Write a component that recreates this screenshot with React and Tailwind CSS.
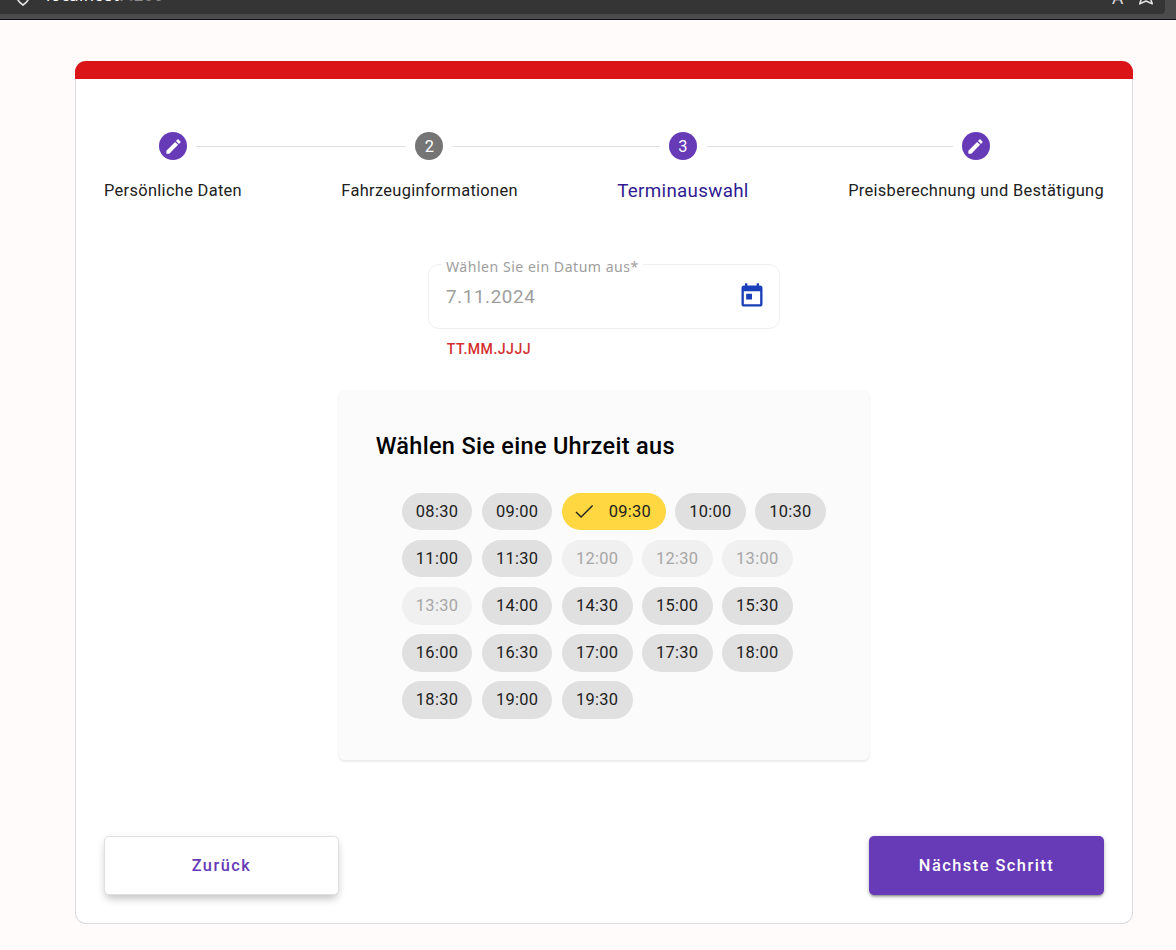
import React from "react";

const slots = [
  "08:30", "09:00", "09:30", "10:00", "10:30", "11:00", "11:30", "12:00", "12:30", "13:00",
  "13:30", "14:00", "14:30", "15:00", "15:30", "16:00", "16:30", "17:00", "17:30", "18:00",
  "18:30", "19:00", "19:30",
];
const disabledSlots = ["12:00", "12:30", "13:00", "13:30"];
const selectedSlot = "09:30";

function Pencil() {
  return (
    <svg viewBox="0 0 24 24" className="size-[19px] fill-white">
      <path d="M3 17.25V21h3.75L17.81 9.94l-3.75-3.75L3 17.25zM20.71 7.04c.39-.39.39-1.02 0-1.41l-2.34-2.34c-.39-.39-1.02-.39-1.41 0l-1.83 1.83 3.75 3.75 1.83-1.83z" />
    </svg>
  );
}

function StepIcon({ children, muted }) {
  return (
    <div
      className={`flex size-[28.2px] shrink-0 items-center justify-center rounded-full text-[16.4px] leading-none text-white ${
        muted ? "bg-[#757575]" : "bg-[#673ab7]"
      }`}
    >
      {children}
    </div>
  );
}

function BrowserBar() {
  return (
    <div className="h-5 overflow-hidden border-b border-[#160f1a] bg-[#4b4b4b] pr-[11px]">
      <div className="flex h-[14px] items-end justify-between overflow-hidden rounded-br-[4px] bg-[#353535] pl-[15px] pr-[11px]">
        <div className="flex h-[14px] items-start">
          <svg viewBox="0 0 16 20" className="-mt-[14px] h-5 w-4 fill-none stroke-[#e6e6e6] stroke-[1.6]">
            <path d="M8 1.5 14 4v7c0 3.5-2.5 5.5-6 8-3.5-2.5-6-4.5-6-8V4z" />
          </svg>
          <span className="-mt-[15px] ml-[15px] font-['Noto_Sans'] text-[16.5px] leading-5 tracking-[0.4px] text-white">
            localhost<span className="text-[#8c8c8c]">:4200</span>
          </span>
        </div>
        <div className="flex h-[14px] items-start gap-[15px]">
          <span className="-mt-[14px] font-['Noto_Sans'] text-[17px] leading-6 text-[#e0e0e0]">A</span>
          <svg viewBox="0 0 16 16" className="-mt-[11px] size-4 fill-none stroke-[#e0e0e0] stroke-[1.6]">
            <path strokeLinejoin="round" d="M8 1.2 10 6l5 .4-2.4 3.3 1.6 5.1L8 12 1.8 14.8l1.6-5.1L1 6.4 6 6z" />
          </svg>
        </div>
      </div>
    </div>
  );
}

function Stepper() {
  return (
    <div className="px-7">
      <div className="flex items-center pl-[55px]">
        <StepIcon><Pencil /></StepIcon>
        <div className="ml-[9px] mr-[9px] h-px w-[210px] bg-[#e0e0e0]" />
        <StepIcon muted><span className="pt-[2px]">2</span></StepIcon>
        <div className="ml-[9.5px] mr-[9px] h-px w-[207px] bg-[#e0e0e0]" />
        <StepIcon><span className="pt-[2px]">3</span></StepIcon>
        <div className="ml-[9.5px] mr-[9px] h-px w-[246px] bg-[#e0e0e0]" />
        <StepIcon><Pencil /></StepIcon>
      </div>
      <div className="mt-[18.8px] flex h-6 items-center justify-between text-[16.43px] tracking-[0.31px] text-[#212121]">
        <span>Persönliche Daten</span>
        <span>Fahrzeuginformationen</span>
        <span className="text-[18.8px] tracking-[0.31px] text-[#311b92]">Terminauswahl</span>
        <span>Preisberechnung und Bestätigung</span>
      </div>
    </div>
  );
}

function DateField() {
  return (
    <div className="mx-auto mt-[61px] w-[352px]">
      <div className="relative flex h-[65px] items-center justify-between rounded-[11px] border border-[#f0f0f0] pl-[17px] pr-[13px]">
        <span className="absolute -top-[9px] left-[13px] bg-white px-1 font-['Noto_Sans'] text-[14.1px] leading-[22px] tracking-[0.5px] whitespace-nowrap text-[#9e9e9e]">
          Wählen Sie ein Datum aus*
        </span>
        <span className="pt-px text-[18.8px] tracking-[0.62px] text-[#9e9e9e]">7.11.2024</span>
        <svg viewBox="0 0 24 24" className="mb-[1px] size-7 fill-[#1a3fb8]">
          <path d="M19 3h-1V1h-2v2H8V1H6v2H5c-1.11 0-1.99.9-1.99 2L3 19c0 1.1.89 2 2 2h14c1.1 0 2-.9 2-2V5c0-1.1-.9-2-2-2zm0 16H5V8h14v11zM7 10h5v5H7z" />
        </svg>
      </div>
      <p className="mt-[9px] pl-[18.8px] text-[14.1px] leading-[22px] font-medium tracking-[0.47px] text-[#d32f2f]">
        TT.MM.JJJJ
      </p>
    </div>
  );
}

function TimeChip({ time }) {
  const base = "flex h-[37.38px] items-center rounded-full pt-px text-[16.43px] tracking-[0.29px]";
  if (time === selectedSlot) {
    return (
      <button className={`${base} w-[103.8px] justify-between bg-[#ffd740] pl-[13px] pr-[14.5px] text-[#212121]`}>
        <svg viewBox="0 0 20 16" className="h-4 w-5 fill-none stroke-[#212121] stroke-[1.4]">
          <path d="M1 8 6.1 13 17.6 1.5" />
        </svg>
        {time}
      </button>
    );
  }
  const tone = disabledSlots.includes(time) ? "bg-[#f0f0f0] text-[#a6a6a6]" : "bg-[#e0e0e0] text-[#212121]";
  return <button className={`${base} ${tone} w-[70.7px] justify-center`}>{time}</button>;
}

export default function App() {
  return (
    <div className="h-[950px] overflow-hidden bg-[#fffbfa] font-['Roboto',sans-serif]">
      <BrowserBar />
      <main className="mt-[41px] ml-[75px] flex h-[863px] w-[1058px] flex-col overflow-hidden rounded-[11px] bg-[#dadce0]">
        <div className="h-[18px] shrink-0 bg-[#db1418]" />
        <div className="mx-px mb-px flex flex-1 flex-col rounded-b-[10px] bg-white pt-[53px]">
          <Stepper />
          <DateField />
          <section className="mx-auto mt-[31px] h-[369px] w-[530px] rounded-[5px] bg-[#fbfbfb] px-[37px] pt-[39px] shadow-[0_2px_3px_rgba(0,0,0,0.08),0_0_3px_rgba(0,0,0,0.03)]">
            <h2 className="-ml-[0.3px] text-[23.5px] leading-8 font-medium tracking-[0.31px] text-black">Wählen Sie eine Uhrzeit aus</h2>
            <div className="mt-[31.05px] ml-[25.7px] flex w-[430px] flex-wrap gap-x-[9.38px] gap-y-[9.69px]">
              {slots.map((time) => <TimeChip key={time} time={time} />)}
            </div>
          </section>
          <div className="mt-auto flex justify-between px-7 pb-7 text-[16.4px] font-medium tracking-[1.47px]">
            <button className="h-[59px] w-[235px] rounded-[5px] border border-[#e0e0e0] bg-white pt-[2px] text-[#673ab7] shadow-[0_6px_8px_-2px_rgba(0,0,0,0.2),0_1px_8px_rgba(0,0,0,0.06)]">
              Zurück
            </button>
            <button className="h-[59px] w-[235px] rounded-[5px] bg-[#673ab7] pt-[2px] text-white shadow-[0_3px_2px_-2px_rgba(0,0,0,0.25),0_2px_3px_rgba(0,0,0,0.2),0_1px_6px_rgba(0,0,0,0.12)]">
              Nächste Schritt
            </button>
          </div>
        </div>
      </main>
    </div>
  );
}
